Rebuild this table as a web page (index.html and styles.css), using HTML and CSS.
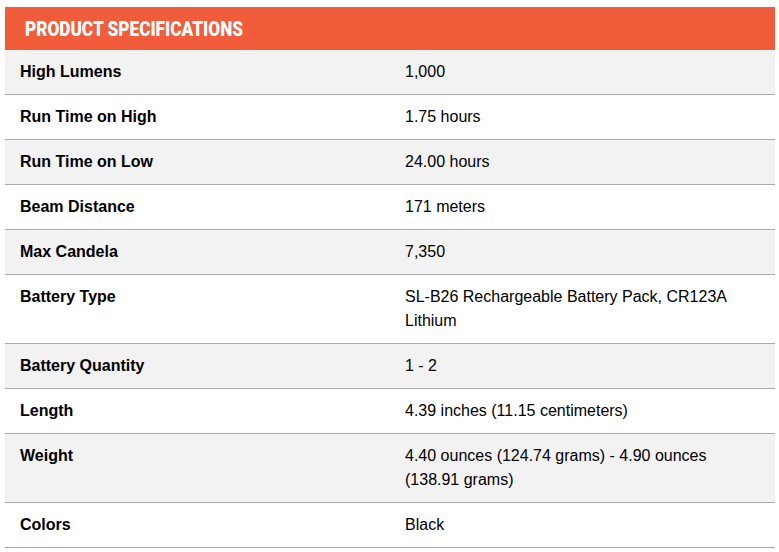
FILE: index.html
```html
<!DOCTYPE html>
<html>
<head>
<meta charset="utf-8">
<link rel="stylesheet" href="styles.css">
</head>
<body>
<div class="specs">
  <div class="specs-head"><span class="specs-title">PRODUCT SPECIFICATIONS</span></div>
  <div class="row odd"><div class="label">High Lumens</div><div class="value">1,000</div></div>
  <div class="row"><div class="label">Run Time on High</div><div class="value">1.75 hours</div></div>
  <div class="row odd"><div class="label">Run Time on Low</div><div class="value">24.00 hours</div></div>
  <div class="row"><div class="label">Beam Distance</div><div class="value">171 meters</div></div>
  <div class="row odd"><div class="label">Max Candela</div><div class="value">7,350</div></div>
  <div class="row"><div class="label">Battery Type</div><div class="value">SL-B26 Rechargeable Battery Pack, CR123A Lithium</div></div>
  <div class="row odd"><div class="label">Battery Quantity</div><div class="value">1 - 2</div></div>
  <div class="row"><div class="label">Length</div><div class="value">4.39 inches (11.15 centimeters)</div></div>
  <div class="row odd"><div class="label">Weight</div><div class="value">4.40 ounces (124.74 grams) - 4.90 ounces (138.91 grams)</div></div>
  <div class="row"><div class="label">Colors</div><div class="value">Black</div></div>
</div>
</body>
</html>
```
FILE: styles.css
```css
html, body {
  margin: 0;
  padding: 0;
  background: #fff;
}
body {
  padding: 7px 4px 0 5px;
  font-family: "Liberation Sans", Arial, sans-serif;
  color: #000;
}
.specs {
  width: 770px;
}
.specs-head {
  background: #f15c3b;
  color: #fff;
  font-family: Roboto, "Liberation Sans", sans-serif;
  font-weight: 900;
  font-size: 20px;
  height: 43px;
  display: flex;
  align-items: center;
  padding-left: 20px;
  box-sizing: border-box;
}
.specs-title {
  display: inline-block;
  transform: scaleX(0.86);
  transform-origin: left center;
}
.row {
  display: grid;
  grid-template-columns: 1fr 1fr;
  border-bottom: 1px solid #a9a9a9;
  background: #fff;
}
.row.odd {
  background: #f2f2f2;
}
.label, .value {
  padding: 10px 15px;
  font-size: 16px;
  line-height: 24px;
}
.label {
  font-weight: 700;
}
```
